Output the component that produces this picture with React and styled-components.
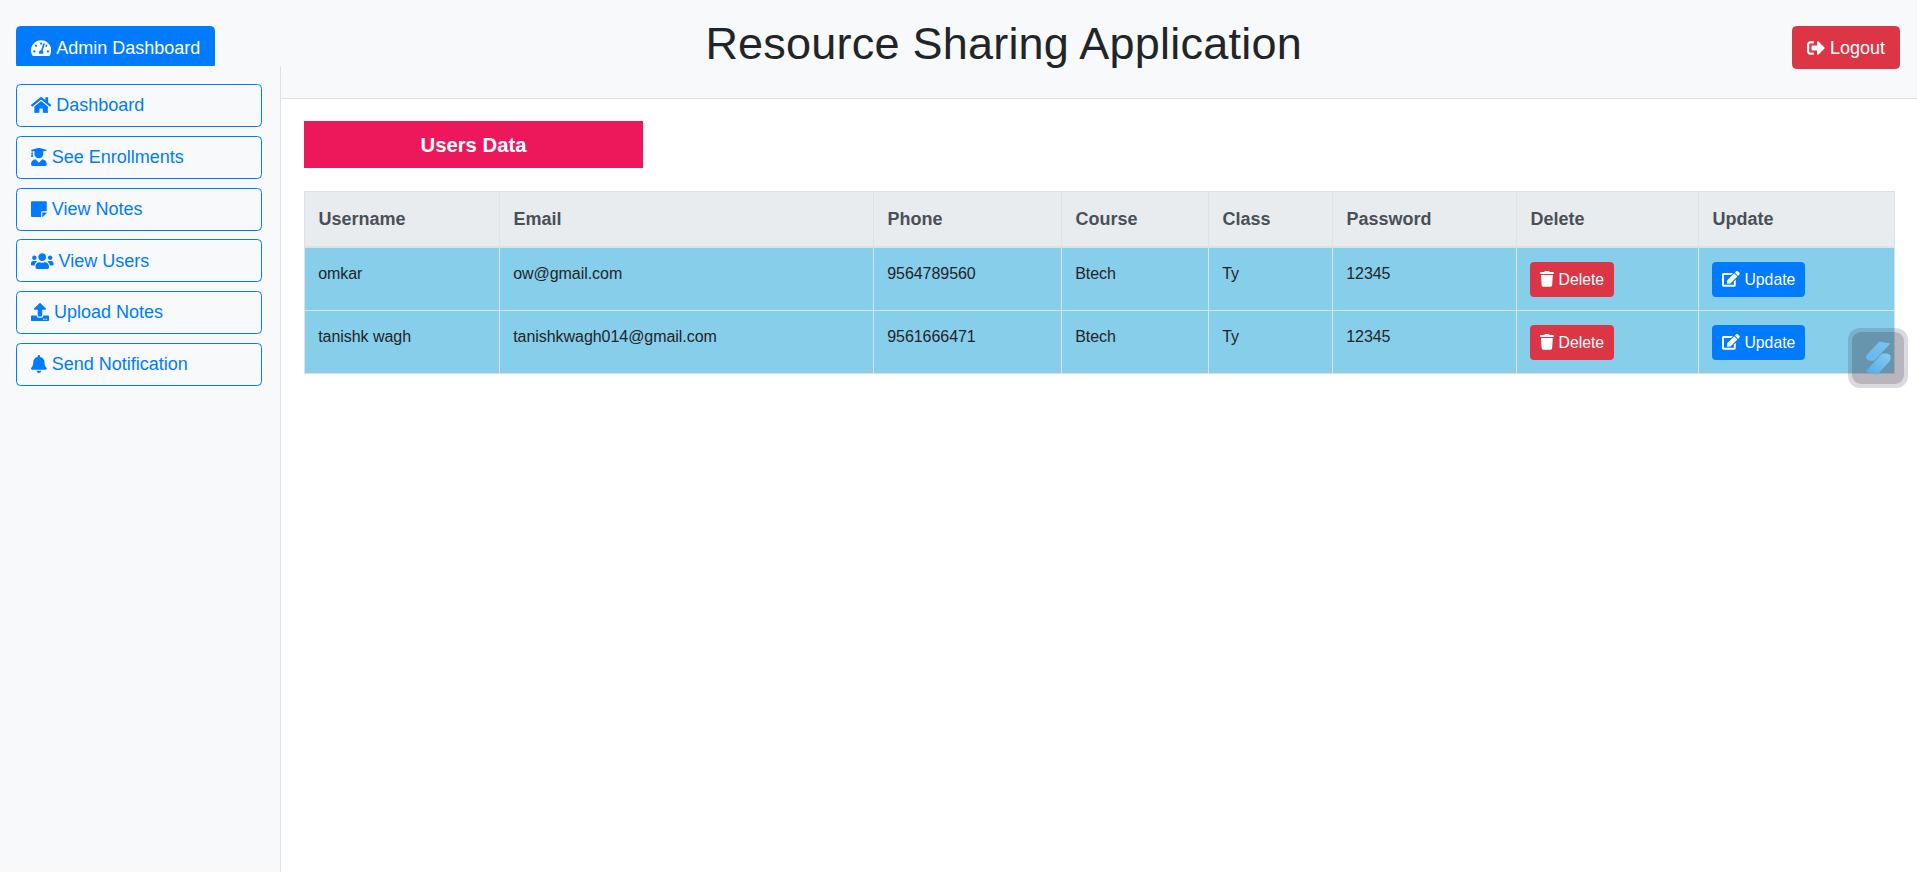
import React from "react";
import styled, { createGlobalStyle } from "styled-components";
import {
  FaTachometerAlt, FaHome, FaUserGraduate, FaStickyNote, FaUsers, FaUpload,
  FaBell, FaSignOutAlt, FaTrash, FaEdit,
} from "react-icons/fa";

const GlobalStyle = createGlobalStyle`
  *, *::before, *::after { box-sizing: border-box; }
  html { font-size: 18px; }
  body {
    margin: 0;
    background: #fff;
    color: #212529;
    font-family: "Liberation Sans", Arial, sans-serif;
    line-height: 1.5;
    overflow: hidden;
  }
`;

const tones = { primary: "#007bff", danger: "#dc3545" };

const Page = styled.div`
  height: 100vh;
  display: flex;
  flex-direction: column;
`;

const Header = styled.header`
  height: 99px;
  flex: none;
  display: flex;
  justify-content: space-between;
  align-items: flex-start;
  padding: 17px 17px 0 16px;
  background: #f8f9fa;
  border-bottom: 1px solid #dee2e6;
`;

const Title = styled.h1`
  margin: 0;
  font-size: 2.5rem;
  font-weight: 400;
  line-height: 1.2;
  letter-spacing: 0.22px;
`;

/* Icon box as wide as its glyph, in em of the surrounding text. */
const Glyph = styled.span`
  display: flex;
  flex: none;
  margin-top: -1px;

  svg {
    width: ${(p) => p.$width}em;
    height: 1em;
  }
`;

const Button = styled.button`
  display: flex;
  align-items: center;
  gap: ${(p) => (p.$small ? "4.4px" : "5px")};
  height: ${(p) => (p.$small ? "35px" : "43px")};
  padding: 0 ${(p) => (p.$small ? "9.2px" : "14px")};
  border: 1px solid ${(p) => tones[p.$tone]};
  border-radius: ${(p) => (p.$small ? "3.6px" : "4.5px")};
  background: ${(p) => tones[p.$tone]};
  color: #fff;
  font: inherit;
  font-size: ${(p) => (p.$small ? "15.75px" : "18px")};
  white-space: nowrap;
`;

const HeaderButton = styled(Button)`
  margin-top: 9px;
  padding-top: 1px;
`;

const Body = styled.div`
  flex: 1;
  display: flex;
  min-height: 0;
`;

const Sidebar = styled.aside`
  position: relative;
  z-index: 1;
  width: 281px;
  flex: none;
  margin-top: -33px;
  padding: 18px 18px 0 16px;
  display: flex;
  flex-direction: column;
  gap: 8.8px;
  background: #f8f9fa;
  border-right: 1px solid #dee2e6;
`;

const NavLink = styled.a`
  display: flex;
  align-items: center;
  gap: 5px;
  height: 43px;
  flex: none;
  padding: 0.3px 14px 0;
  border: 1px solid #007bff;
  border-radius: 4.5px;
  color: #007bff;
  font-size: 18px;
`;

const Main = styled.main`
  flex: 1;
  padding: 22px 22px 0 23px;
`;

const SectionTitle = styled.h2`
  width: 339px;
  height: 47px;
  margin: 0 0 23px;
  padding-top: 1px;
  display: flex;
  align-items: center;
  justify-content: center;
  background: #ec185b;
  color: #fff;
  font-size: 20.25px;
  font-weight: 700;
`;

const Table = styled.table`
  width: 1591px;
  table-layout: fixed;
  border-collapse: collapse;
  border: 1px solid #dee2e6;
`;

const HeadCell = styled.th`
  height: 55.5px;
  padding: 0 13.5px;
  border: 1px solid #dee2e6;
  border-bottom-width: 2px;
  background: #e9ecef;
  color: #495057;
  font-size: 18px;
  text-align: left;
  vertical-align: middle;
`;

const Cell = styled.td`
  height: 63.25px;
  padding: 14px 13.2px 0;
  border: 1px solid #dee2e6;
  background: #87ceeb;
  font-size: 16px;
  line-height: 23px;
  letter-spacing: -0.05px;
  vertical-align: top;
`;

const Widget = styled.div`
  position: fixed;
  top: 328px;
  right: 9px;
  width: 60px;
  height: 60px;
  padding: 4px;
  border-radius: 12px;
  background: rgba(33, 37, 60, 0.17);
`;

const WidgetFace = styled.div`
  width: 52px;
  height: 52px;
  border-radius: 9px;
  background: rgba(50, 40, 50, 0.2);
`;

const links = [
  [FaHome, 1.125, "Dashboard"],
  [FaUserGraduate, 0.875, "See Enrollments"],
  [FaStickyNote, 0.875, "View Notes"],
  [FaUsers, 1.25, "View Users"],
  [FaUpload, 1, "Upload Notes"],
  [FaBell, 0.875, "Send Notification"],
];

const columns = [
  ["Username", 195], ["Email", 374], ["Phone", 188], ["Course", 147],
  ["Class", 124], ["Password", 184], ["Delete", 182], ["Update", 196],
];

const users = [
  ["omkar", "ow@gmail.com", "9564789560", "Btech", "Ty", "12345"],
  ["tanishk wagh", "tanishkwagh014@gmail.com", "9561666471", "Btech", "Ty", "12345"],
];

function WidgetLogo() {
  return (
    <svg width="52" height="52" viewBox="0 0 52 52" fill="none">
      <defs>
        <linearGradient id="upper" x1="16" y1="28" x2="38" y2="10" gradientUnits="userSpaceOnUse">
          <stop stopColor="#68b8ec" />
          <stop offset="1" stopColor="#79c3ee" />
        </linearGradient>
        <linearGradient id="lower" x1="38" y1="24" x2="20" y2="42" gradientUnits="userSpaceOnUse">
          <stop stopColor="#84c9f1" />
          <stop offset="1" stopColor="#58b0e8" />
        </linearGradient>
      </defs>
      <path d="M27.5 9.5 38.3 11.5 22.5 28.5C20 29.2 17 28.7 15 27.5 13.6 25.8 14 23.6 15.5 22Z" fill="url(#upper)" />
      <path d="M29.5 22C33 21 36.5 21.5 38.3 23.5 39 26 38.7 28 37 30L25.2 42.7 13.7 39.5Z" fill="url(#lower)" />
    </svg>
  );
}

export default function App() {
  return (
    <>
      <GlobalStyle />
      <Page>
        <Header>
          <HeaderButton $tone="primary">
            <Glyph $width={1.125}><FaTachometerAlt /></Glyph>Admin Dashboard
          </HeaderButton>
          <Title>Resource Sharing Application</Title>
          <HeaderButton $tone="danger">
            <Glyph $width={1}><FaSignOutAlt /></Glyph>Logout
          </HeaderButton>
        </Header>
        <Body>
          <Sidebar>
            {links.map(([Icon, width, label]) => (
              <NavLink key={label}><Glyph $width={width}><Icon /></Glyph>{label}</NavLink>
            ))}
          </Sidebar>
          <Main>
            <SectionTitle>Users Data</SectionTitle>
            <Table>
              <colgroup>
                {columns.map(([name, width]) => <col key={name} width={width} />)}
              </colgroup>
              <thead>
                <tr>{columns.map(([name]) => <HeadCell key={name}>{name}</HeadCell>)}</tr>
              </thead>
              <tbody>
                {users.map((user) => (
                  <tr key={user[0]}>
                    {user.map((value, i) => <Cell key={i}>{value}</Cell>)}
                    <Cell>
                      <Button $small $tone="danger"><Glyph $width={0.875}><FaTrash /></Glyph>Delete</Button>
                    </Cell>
                    <Cell>
                      <Button $small $tone="primary"><Glyph $width={1.125}><FaEdit /></Glyph>Update</Button>
                    </Cell>
                  </tr>
                ))}
              </tbody>
            </Table>
          </Main>
        </Body>
      </Page>
      <Widget><WidgetFace><WidgetLogo /></WidgetFace></Widget>
    </>
  );
}
